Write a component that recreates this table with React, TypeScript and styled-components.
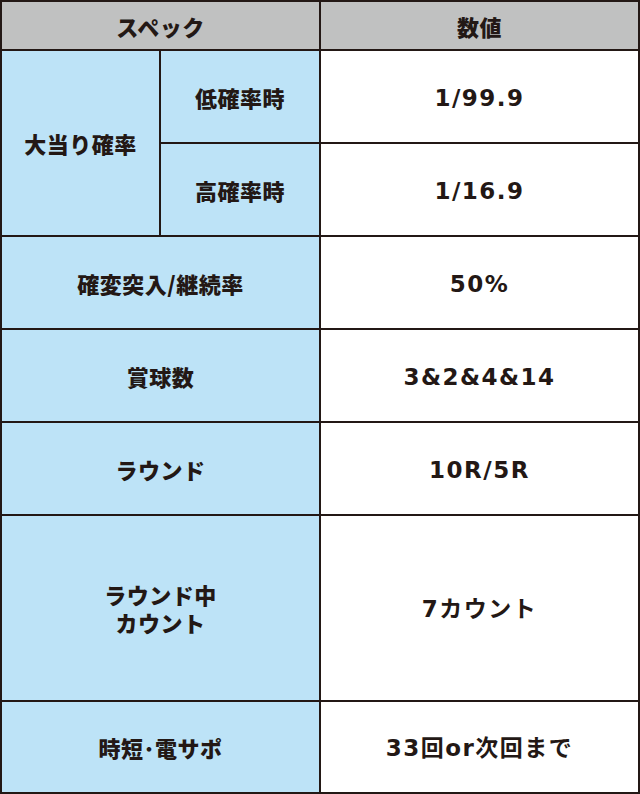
import styled, { createGlobalStyle } from 'styled-components';

const GlobalStyle = createGlobalStyle`
  html, body {
    margin: 0;
    padding: 0;
    background: #ffffff;
  }
`;

type Tone = 'head' | 'label' | 'value';

type SpecRow = {
  label: string[];
  value: string;
  height: number;
};

const rows: SpecRow[] = [
  { label: ['確変突入/継続率'], value: '50%', height: 91 },
  { label: ['賞球数'], value: '3&2&4&14', height: 91 },
  { label: ['ラウンド'], value: '10R/5R', height: 91 },
  { label: ['ラウンド中', 'カウント'], value: '7カウント', height: 184 },
  { label: ['時短･電サポ'], value: '33回or次回まで', height: 90 },
];

const toneColors: Record<Tone, string> = {
  head: '#c0c1c1',
  label: '#bde3f7',
  value: '#ffffff',
};

const App = () => {
  const rowHeights = [47, 91, 91, ...rows.map((r) => r.height)];

  return (
    <>
      <GlobalStyle />
      <SpecTable style={{ gridTemplateRows: rowHeights.map((h) => `${h}px`).join(' ') }}>
        <Cell $tone='head' $col='1 / 3'>
          <LabelText>スペック</LabelText>
        </Cell>
        <Cell $tone='head' $col='3'>
          <LabelText>数値</LabelText>
        </Cell>

        <Cell $tone='label' $col='1' $row='2 / 4'>
          <LabelText>大当り確率</LabelText>
        </Cell>
        <Cell $tone='label' $col='2'>
          <LabelText>低確率時</LabelText>
        </Cell>
        <Cell $tone='value' $col='3'>
          <ValueText>1/99.9</ValueText>
        </Cell>
        <Cell $tone='label' $col='2'>
          <LabelText>高確率時</LabelText>
        </Cell>
        <Cell $tone='value' $col='3'>
          <ValueText>1/16.9</ValueText>
        </Cell>

        {rows.map((row) => (
          <Row key={row.value}>
            <Cell $tone='label' $col='1 / 3'>
              <LabelText>
                {row.label.map((line) => (
                  <span key={line}>{line}</span>
                ))}
              </LabelText>
            </Cell>
            <Cell $tone='value' $col='3'>
              <ValueText>{row.value}</ValueText>
            </Cell>
          </Row>
        ))}
      </SpecTable>
    </>
  );
};

export default App;

const SpecTable = styled.div`
  display: grid;
  grid-template-columns: 157px 158px 317px;
  gap: 2px;
  padding: 2px;
  width: 640px;
  box-sizing: border-box;
  background: #231815;
`;

const Row = styled.div`
  display: contents;
`;

const Cell = styled.div<{ $tone: Tone; $col: string; $row?: string }>`
  grid-column: ${({ $col }) => $col};
  grid-row: ${({ $row }) => $row ?? 'auto'};
  background: ${({ $tone }) => toneColors[$tone]};
  display: flex;
  align-items: center;
  justify-content: center;
  color: #231815;
`;

const LabelText = styled.div`
  display: flex;
  flex-flow: column;
  align-items: center;
  gap: 6px;
  font-family: 'Noto Sans CJK JP', sans-serif;
  font-weight: 900;
  font-size: 22px;
  letter-spacing: 0.5px;
  line-height: 1;

  span {
    display: block;
  }
`;

const ValueText = styled.div`
  padding-top: 2px;
  font-family: 'DejaVu Sans', 'Noto Sans CJK JP', sans-serif;
  font-weight: 700;
  font-size: 23px;
  letter-spacing: 1.5px;
  line-height: 28px;
`;
